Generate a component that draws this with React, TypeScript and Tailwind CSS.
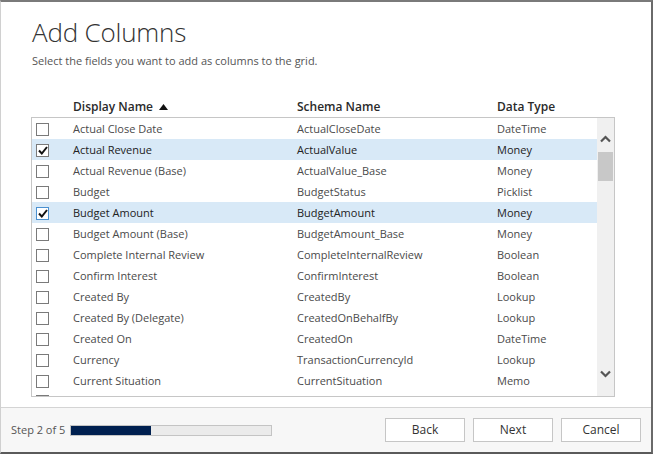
import React from "react";

const rows = [
  { name: "Actual Close Date", schema: "ActualCloseDate", type: "DateTime", checked: false },
  { name: "Actual Revenue", schema: "ActualValue", type: "Money", checked: true },
  { name: "Actual Revenue (Base)", schema: "ActualValue_Base", type: "Money", checked: false },
  { name: "Budget", schema: "BudgetStatus", type: "Picklist", checked: false },
  { name: "Budget Amount", schema: "BudgetAmount", type: "Money", checked: true, focus: true },
  { name: "Budget Amount (Base)", schema: "BudgetAmount_Base", type: "Money", checked: false },
  { name: "Complete Internal Review", schema: "CompleteInternalReview", type: "Boolean", checked: false },
  { name: "Confirm Interest", schema: "ConfirmInterest", type: "Boolean", checked: false },
  { name: "Created By", schema: "CreatedBy", type: "Lookup", checked: false },
  { name: "Created By (Delegate)", schema: "CreatedOnBehalfBy", type: "Lookup", checked: false },
  { name: "Created On", schema: "CreatedOn", type: "DateTime", checked: false },
  { name: "Currency", schema: "TransactionCurrencyId", type: "Lookup", checked: false },
  { name: "Current Situation", schema: "CurrentSituation", type: "Memo", checked: false },
];

function Checkbox({ checked, focus }: { checked: boolean; focus?: boolean }) {
  return (
    <div
      className={`w-[13px] h-[13px] bg-white border flex items-center justify-center ${
        focus ? "border-[#4a90d0]" : "border-[#7a7a7a]"
      }`}
    >
      {checked && (
        <svg width="10" height="9" viewBox="0 0 10 9">
          <path d="M1 4.5 L3.8 7.5 L9 1" fill="none" stroke="#111" strokeWidth="2" />
        </svg>
      )}
    </div>
  );
}

export default function App() {
  return (
    <div
      className="w-[653px] h-[454px] bg-white flex flex-col border-t-2 border-t-[#7a7a7a] border-r-2 border-r-[#6a6a6a] border-b-2 border-b-[#5a5a5a] border-l border-l-[#d0d0d0] text-[#444]"
      style={{ fontFamily: '"Open Sans", "Noto Sans", sans-serif' }}
    >
      {/* Header */}
      <div className="pl-[31px] pt-[13px]">
        <h1 className="text-[26px] leading-[34px] font-light text-[#333] tracking-[-0.2px]">Add Columns</h1>
        <p className="mt-[4px] text-[11px] leading-[16px] text-[#555]">
          Select the fields you want to add as columns to the grid.
        </p>
      </div>

      {/* Column headers */}
      <div className="ml-[31px] mt-[27px] h-[21px] grid grid-cols-[41px_224px_200px_1fr] items-center text-[12px] font-semibold text-[#2a2a2a]">
        <div />
        <div className="flex items-center gap-[6px]">
          Display Name
          <svg width="9" height="6" viewBox="0 0 9 6">
            <path d="M0 6 L4.5 0 L9 6 Z" fill="#111" />
          </svg>
        </div>
        <div>Schema Name</div>
        <div>Data Type</div>
      </div>

      {/* Grid */}
      <div className="ml-[30px] w-[584px] h-[280px] border border-[#c6c6c6] flex overflow-hidden">
        <div className="flex-1 overflow-hidden">
          {rows.map((r) => (
            <div
              key={r.name}
              className={`h-[21px] pt-[1px] grid grid-cols-[41px_224px_200px_1fr] items-center text-[11px] ${
                r.checked ? "bg-[#d8e9f7] text-[#222]" : "text-[#4a4a4a]"
              }`}
            >
              <div className="pl-[4px]">
                <Checkbox checked={r.checked} focus={r.focus} />
              </div>
              <div>{r.name}</div>
              <div>{r.schema}</div>
              <div>{r.type}</div>
            </div>
          ))}
          {/* next row, only its checkbox edge is visible */}
          <div className="h-[21px] pt-[4px] pl-[4px]">
            <Checkbox checked={false} />
          </div>
        </div>
        <div className="w-[17px] bg-[#f0f0f0] flex flex-col items-center">
          <svg className="mt-[17px]" width="11" height="8" viewBox="0 0 11 8">
            <path d="M1 6.5 L5.5 2 L10 6.5" fill="none" stroke="#555" strokeWidth="2.2" />
          </svg>
          <div className="mt-[9px] w-[15px] h-[29px] bg-[#c8c8c8]" />
          <div className="flex-1" />
          <svg className="mb-[18px]" width="11" height="8" viewBox="0 0 11 8">
            <path d="M1 1.5 L5.5 6 L10 1.5" fill="none" stroke="#555" strokeWidth="2.2" />
          </svg>
        </div>
      </div>

      <div className="flex-1" />

      {/* Footer */}
      <div className="h-[45px] border-t border-[#d4d4d4] bg-[#f7f7f7] flex items-center pl-[10px] pr-[10px]">
        <span className="text-[11px] text-[#555]">Step 2 of 5</span>
        <div className="ml-[5px] w-[202px] h-[11px] border border-[#c4c4c4] bg-[#ebebeb]">
          <div className="w-[80px] h-full bg-[#002050]" />
        </div>
        <div className="flex-1" />
        <div className="flex gap-[8px]">
          {["Back", "Next", "Cancel"].map((b) => (
            <button
              key={b}
              className="w-[80px] h-[24px] bg-white border border-[#c6c6c6] text-[12px] text-[#333]"
            >
              {b}
            </button>
          ))}
        </div>
      </div>
    </div>
  );
}
